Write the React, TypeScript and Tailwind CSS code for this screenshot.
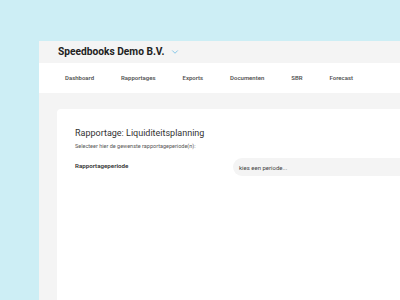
import { ChevronDown } from 'lucide-react'

const tabs = ['Dashboard', 'Rapportages', 'Exports', 'Documenten', 'SBR', 'Forecast']

export default function App() {
  return (
    <div
      className="w-[400px] h-[300px] overflow-hidden bg-[#cdeef5] pl-[39px] pt-[41px] flex"
      style={{ fontFamily: 'Roboto, "Noto Sans", sans-serif' }}
    >
      <div className="flex-1 bg-[#f4f4f4] flex flex-col min-w-[400px]">
        {/* company header */}
        <div className="h-[22px] pl-[19px] flex items-center gap-[6px]">
          <span className="text-[10.2px] font-bold text-[#222] leading-none">Speedbooks Demo B.V.</span>
          <ChevronDown className="w-[10px] h-[10px] text-[#7dc3e6]" strokeWidth={2.2} />
        </div>

        {/* tabs */}
        <div className="h-[30px] bg-white flex items-center pl-[26px] gap-[27px]">
          {tabs.map((tab) => (
            <span key={tab} className="text-[6px] font-semibold text-[#555] leading-none">
              {tab}
            </span>
          ))}
        </div>

        {/* content */}
        <div className="flex-1 pl-[18px] pt-[16px]">
          <div className="h-full bg-white rounded-tl-[4px] pl-[18px] pt-[19px]">
            <h1 className="text-[9px] text-[#333] leading-[11px]">Rapportage: Liquiditeitsplanning</h1>
            <p className="text-[5.5px] text-[#555] mt-[4px] leading-[7px]">Selecteer hier de gewenste rapportageperiode(n):</p>
            <div className="flex items-center mt-[8px]">
              <span className="w-[158px] text-[6.2px] font-semibold text-[#333]">Rapportageperiode</span>
              <div className="flex-1 h-[18px] bg-[#f4f4f4] rounded-l-full flex items-center pl-[6px]">
                <span className="text-[6px] text-[#444]">kies een periode...</span>
              </div>
            </div>
          </div>
        </div>
      </div>
    </div>
  )
}
